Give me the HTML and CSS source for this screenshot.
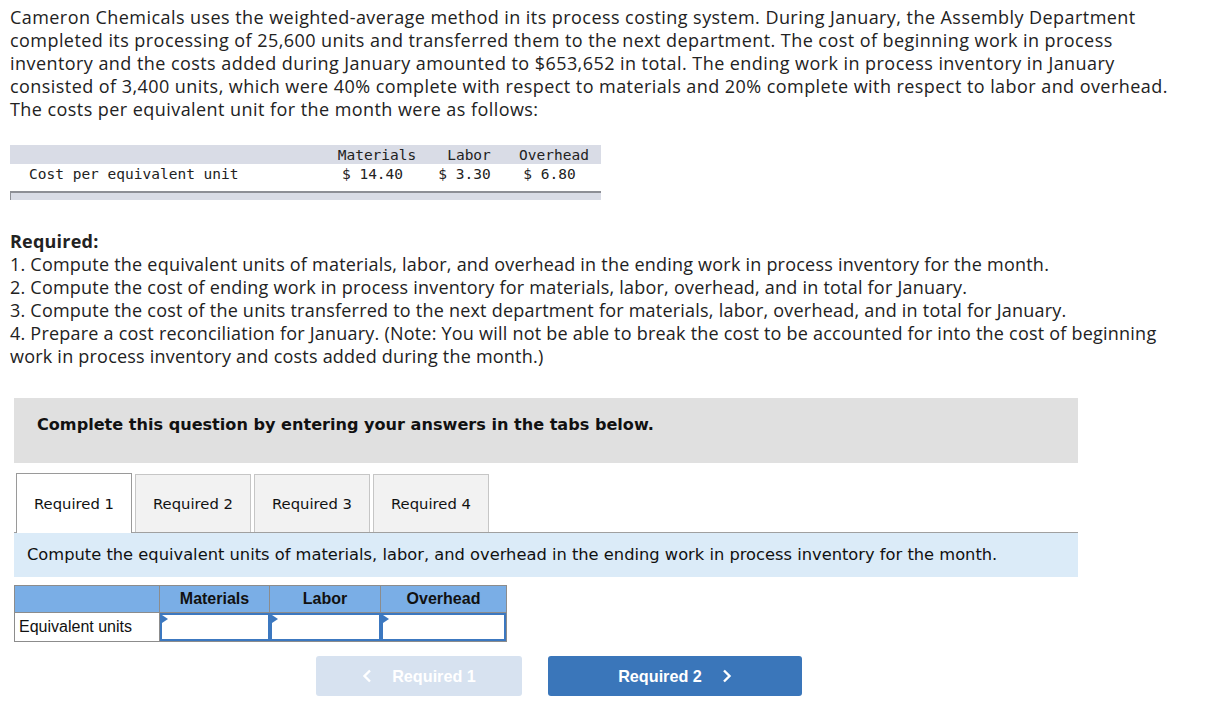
FILE: index.html
```html
<!DOCTYPE html>
<html>
<head>
<meta charset="utf-8">
<link rel="stylesheet" href="styles.css">
</head>
<body>
<div class="page">
  <p class="intro">Cameron Chemicals uses the weighted-average method in its process costing system. During January, the Assembly Department completed its processing of 25,600 units and transferred them to the next department. The cost of beginning work in process inventory and the costs added during January amounted to $653,652 in total. The ending work in process inventory in January consisted of 3,400 units, which were 40% complete with respect to materials and 20% complete with respect to labor and overhead. The costs per equivalent unit for the month were as follows:</p>

  <div class="cost-table">
    <div class="ct-row ct-head">
      <span class="ct-label"></span>
      <span class="ct-c1">Materials</span>
      <span class="ct-c2">Labor</span>
      <span class="ct-c3">Overhead</span>
    </div>
    <div class="ct-row ct-body">
      <span class="ct-label">Cost per equivalent unit</span>
      <span class="ct-c1">$ 14.40</span>
      <span class="ct-c2">$ 3.30</span>
      <span class="ct-c3">$ 6.80</span>
    </div>
    <div class="ct-foot"></div>
  </div>

  <div class="required">
    <div class="req-title">Required:</div>
    <div>1. Compute the equivalent units of materials, labor, and overhead in the ending work in process inventory for the month.</div>
    <div>2. Compute the cost of ending work in process inventory for materials, labor, overhead, and in total for January.</div>
    <div>3. Compute the cost of the units transferred to the next department for materials, labor, overhead, and in total for January.</div>
    <div>4. Prepare a cost reconciliation for January. (Note: You will not be able to break the cost to be accounted for into the cost of beginning work in process inventory and costs added during the month.)</div>
  </div>

  <div class="work">
    <div class="banner">Complete this question by entering your answers in the tabs below.</div>
    <div class="tabs">
      <div class="tab active">Required 1</div>
      <div class="tab">Required 2</div>
      <div class="tab">Required 3</div>
      <div class="tab">Required 4</div>
    </div>
    <div class="instr">Compute the equivalent units of materials, labor, and overhead in the ending work in process inventory for the month.</div>
    <table class="ans">
      <colgroup>
        <col class="c0">
        <col class="c1">
        <col class="c2">
        <col class="c3">
      </colgroup>
      <tr class="ans-head">
        <th></th>
        <th>Materials</th>
        <th>Labor</th>
        <th>Overhead</th>
      </tr>
      <tr>
        <td class="lbl">Equivalent units</td>
        <td class="inp"><div class="box"></div></td>
        <td class="inp"><div class="box"></div></td>
        <td class="inp"><div class="box"></div></td>
      </tr>
    </table>
    <div class="nav">
      <div class="btn prev">
        <svg class="chev" width="10" height="14" viewBox="0 0 10 14"><polyline points="8,1.5 2.5,7 8,12.5" fill="none" stroke="#fff" stroke-width="2.4"/></svg>
        <span>Required 1</span>
      </div>
      <div class="btn next">
        <span>Required 2</span>
        <svg class="chev" width="10" height="14" viewBox="0 0 10 14"><polyline points="2,1.5 7.5,7 2,12.5" fill="none" stroke="#fff" stroke-width="2.4"/></svg>
      </div>
    </div>
  </div>
</div>
</body>
</html>
```

FILE: styles.css
```css
html, body {
  margin: 0;
  padding: 0;
  background: #fff;
}
.page {
  padding: 6px 10px 0 10px;
  color: #222;
  font-family: "Open Sans", "Liberation Sans", sans-serif;
}
.intro {
  margin: 0;
  font-size: 18px;
  letter-spacing: 0.44px;
  line-height: 23px;
  color: #222;
  width: 1180px;
}
.cost-table {
  margin-top: 24px;
  width: 591px;
  font-family: "DejaVu Sans Mono", "Liberation Mono", monospace;
  font-size: 14.5px;
  color: #222;
}
.ct-row {
  display: grid;
  grid-template-columns: 19px 301px 94px 90px 80px;
  align-items: center;
}
.ct-row::before {
  content: "";
}
.ct-head {
  height: 19px;
  background: #d9dce6;
}
.ct-body {
  height: 20px;
}
.ct-label {
  text-align: left;
}
.ct-c1, .ct-c2, .ct-c3 {
  text-align: center;
}
.ct-body .ct-c1, .ct-body .ct-c2, .ct-body .ct-c3 {
  padding-right: 9px;
}
.ct-foot {
  margin-top: 7px;
  height: 7px;
  background: #d9dce6;
  border-top: 2px solid #8d8f96;
  border-left: 1px solid #8d8f96;
}
.required {
  margin-top: 30px;
  font-size: 18px;
  letter-spacing: 0.22px;
  line-height: 23px;
  width: 1180px;
}
.req-title {
  font-weight: bold;
}
.work {
  margin-top: 30px;
  margin-left: 4px;
  width: 1064px;
}
.banner {
  background: #e0e0e0;
  height: 65px;
  box-sizing: border-box;
  padding: 17px 0 0 23px;
  font-family: "DejaVu Sans", Verdana, sans-serif;
  font-weight: bold;
  font-size: 16.1px;
  color: #111;
}
.tabs {
  margin-top: 10px;
  display: flex;
  gap: 3px;
  padding-left: 2px;
  border-bottom: 1px solid #a0a0a0;
  height: 59px;
  align-items: flex-end;
}
.tab {
  width: 116px;
  height: 58px;
  box-sizing: border-box;
  border: 1px solid #c6c6c6;
  border-bottom: none;
  background: #f2f2f2;
  font-family: "DejaVu Sans", Verdana, sans-serif;
  font-size: 14.8px;
  color: #111;
  display: flex;
  align-items: center;
  justify-content: center;
}
.tab.active {
  height: 60px;
  margin-bottom: -1px;
  padding-bottom: 1px;
  background: #fff;
  border-color: #9a9a9a;
}
.instr {
  background: #dbebf8;
  height: 44px;
  box-sizing: border-box;
  padding: 12px 0 0 13px;
  font-family: "DejaVu Sans", Verdana, sans-serif;
  font-size: 16.3px;
  color: #111;
}
.ans {
  margin-top: 8px;
  width: 492px;
  table-layout: fixed;
  border-collapse: collapse;
  font-family: "Liberation Sans", Arial, sans-serif;
  font-size: 16px;
  color: #111;
  border: 1px solid #8c8c8c;
}
.c0 { width: 145px; }
.c1 { width: 110px; }
.c2 { width: 111px; }
.c3 { width: 126px; }
.ans th {
  background: #7aaee6;
  height: 26px;
  padding: 0;
  font-weight: bold;
  border-left: 1px solid #8c8c8c;
  border-bottom: 1px solid #8c8c8c;
}
.ans th:first-child { border-left: none; }
.ans td {
  height: 28px;
  padding: 0;
}
.lbl {
  padding-left: 4px !important;
  text-align: left;
  border-right: 1px solid #8c8c8c;
}
.inp .box {
  position: relative;
  height: 28px;
  border: 2px solid #3c78c0;
  box-sizing: border-box;
  background: #fff;
}
.inp .box::before {
  content: "";
  position: absolute;
  left: 0;
  top: 0;
  border-left: 6px solid #3c78c0;
  border-top: 4px solid transparent;
  border-bottom: 4px solid transparent;
}
.nav {
  margin-top: 14px;
  display: flex;
  gap: 26px;
  padding-left: 302px;
}
.btn {
  height: 40px;
  border-radius: 3px;
  display: flex;
  align-items: center;
  justify-content: center;
  gap: 20px;
  font-family: "Liberation Sans", Arial, sans-serif;
  font-weight: bold;
  font-size: 16.2px;
  color: #fff;
}
.btn.prev {
  width: 206px;
  background: #d7e2f0;
}
.btn.next {
  width: 254px;
  background: #3a76ba;
}
.chev {
  display: block;
}
```
